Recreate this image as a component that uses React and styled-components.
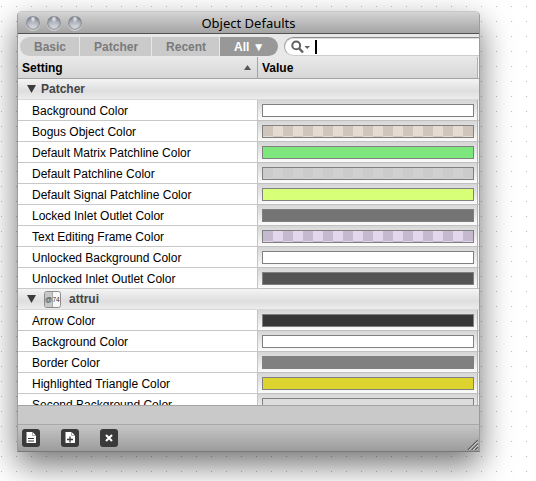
import React, { useState } from "react";
import styled, { createGlobalStyle, css } from "styled-components";

const GlobalStyle = createGlobalStyle`
  * { box-sizing: border-box; }
  body {
    margin: 0;
    font-family: "Liberation Sans", Arial, sans-serif;
    font-size: 12px;
    color: #000;
  }
  button { font: inherit; color: inherit; border: 0; margin: 0; padding: 0; background: none; }
`;

const Canvas = styled.main`
  display: flex;
  height: 100vh;
  padding: 11px 56px 29px 17px;
  overflow: hidden;
  background:
    linear-gradient(transparent 1px, #fff 1px) 1px 6px / 15px 15px,
    linear-gradient(90deg, #bebebe 1px, #fff 1px) 1px 6px / 15px 15px;
`;

const Window = styled.section`
  display: flex;
  flex-direction: column;
  flex: 1;
  min-width: 0;
  border: 1px solid #9c9c9c;
  border-top-color: #c8c8c8;
  border-bottom-color: #787878;
  border-radius: 5px 5px 0 0;
  background: #e8e8e8;
  box-shadow: 0 13px 32px rgba(0, 0, 0, 0.55);
`;

const TitleBar = styled.header`
  display: grid;
  grid-template-columns: 1fr auto 1fr;
  align-items: center;
  height: 22px;
  padding: 1px 8px 0;
  border-bottom: 1px solid #555055;
  border-radius: 4px 4px 0 0;
  background: linear-gradient(#d4d4d4, #a4a4a4);
`;

const Lights = styled.div`
  display: flex;
  gap: 7px;
`;

const Light = styled.button`
  width: 14px;
  height: 14px;
  border-radius: 50%;
  background:
    radial-gradient(ellipse at 50% 15%, #fff 0, transparent 30%),
    linear-gradient(#707682, #b0b4bc 45%, #eceef0);
  box-shadow: inset 0 0 2px 1px #7c818b, 0 1px 0 #d4d4d4;
`;

const Title = styled.h1`
  margin: 0;
  font: 400 13px/20px "Noto Sans", sans-serif;
`;

const Toolbar = styled.div`
  display: flex;
  align-items: flex-start;
  gap: 6px;
  height: 23px;
  padding: 3px 0 0 2px;
  background: #e8e8e8;
`;

const Tabs = styled.nav`
  display: flex;
  gap: 1px;
`;

const Tab = styled.button`
  height: 19px;
  padding: 0 13px 0 14px;
  background: ${(p) => (p.$active ? "#989898" : "#cacaca")};
  color: ${(p) => (p.$active ? "#fff" : "#7a7a7a")};
  font-weight: 700;
  line-height: 18px;
  white-space: nowrap;
  &:first-child { border-radius: 10px 0 0 10px; }
  &:last-child { border-radius: 0 10px 10px 0; }
`;

const SearchBox = styled.label`
  display: flex;
  align-items: center;
  flex: 1;
  min-width: 0;
  height: 19px;
  padding-left: 6px;
  border: solid #8c8c8c;
  border-width: 1px 0 1px 1px;
  border-bottom-color: #ccc;
  border-left-color: #a4a4a4;
  border-radius: 10px 0 0 10px;
  background: #fff;
  box-shadow: inset 0 1px 0 #ddd;
`;

const Caret = styled.span`
  width: 2px;
  height: 14px;
  margin-left: 4px;
  background: #000;
`;

const SearchInput = styled.input`
  flex: 1;
  min-width: 0;
  border: 0;
  padding: 0;
  outline: 0;
  background: transparent;
  font: inherit;
`;

const Pane = styled.div`
  flex: 1;
  min-height: 0;
  overflow: auto;
  scrollbar-width: none;
  background: #fff;
`;

const Table = styled.table`
  width: 100%;
  table-layout: fixed;
  border-collapse: separate;
  border-spacing: 0;
  font-size: 12px;
`;

const edge = css`
  box-shadow: inset -1px 0 #f4f4f4, inset -2px 0 #b0b0b0;
`;

const ColumnHead = styled.th`
  width: ${(p) => (p.$setting ? "240px" : "auto")};
  height: 22px;
  padding: 0 6px 0 4px;
  border-bottom: 1px solid #a4a4a4;
  border-right: ${(p) => (p.$setting ? "1px solid #a4a4a4" : "0")};
  background: linear-gradient(#e9e9e9, #d6d6d6);
  text-align: left;
  ${(p) => !p.$setting && edge}
`;

const HeadContent = styled.div`
  display: flex;
  align-items: center;
  justify-content: space-between;
`;

const GroupHead = styled.th`
  height: 21px;
  padding: 0 9px;
  border-bottom: 1px solid #d8d8d8;
  background: linear-gradient(#f4f4f4, #dedede 60%, #ececec);
  text-align: left;
`;

const GroupToggle = styled.button`
  display: flex;
  align-items: center;
  gap: ${(p) => (p.$wide ? "8px" : "5px")};
  height: 20px;
  color: #444;
  font-weight: 700;
`;

const NameCell = styled.td`
  height: 21px;
  padding: 2px 0 0 14px;
  border-bottom: 1px solid #c8c8c8;
  border-right: 1px solid #c4c4c4;
  line-height: 18px;
  white-space: nowrap;
  background: #fff;
`;

const ValueCell = styled.td`
  height: 21px;
  padding: 0 5px 0 4px;
  border-bottom: 1px solid #c0c0c0;
  background: linear-gradient(#d6d6d6, #fbfbfb);
  ${edge}
`;

const Swatch = styled.button`
  display: block;
  width: 100%;
  height: 13px;
  border: 1px solid #808080;
  background: ${(p) =>
    p.$alt
      ? `repeating-conic-gradient(${p.$alt} 0 25%, ${p.$color} 0 50%) 0 0 / 20px 20px`
      : p.$color};
`;

const StatusStrip = styled.div`
  height: 19px;
  border-top: 1px solid #a4a4a4;
  background: #c9c9c9;
`;

const Footer = styled.footer`
  display: flex;
  align-items: flex-start;
  justify-content: space-between;
  height: 27px;
  padding: 4px 0 0 4px;
  border-top: 1px solid #a8a8a8;
  background: linear-gradient(#c6c6c6, #9c9c9c);
`;

const Actions = styled.div`
  display: flex;
  gap: 21px;
`;

const ActionButton = styled.button`
  width: 18px;
  height: 18px;
  border-radius: 3px;
  background: #3a3a3a;
  svg { display: block; }
`;

const Grip = styled.svg`
  align-self: flex-end;
  margin: 0 1px 1px 0;
`;

const groups = [
  {
    name: "Patcher",
    rows: [
      ["Background Color", "#ffffff"],
      ["Bogus Object Color", "#cfc5bb", "#e5dbd1"],
      ["Default Matrix Patchline Color", "#7de77e"],
      ["Default Patchline Color", "#cbcbcb", "#d0d0d0"],
      ["Default Signal Patchline Color", "#d8ff78"],
      ["Locked Inlet Outlet Color", "#747474"],
      ["Text Editing Frame Color", "#c5b9cf", "#e3d7eb"],
      ["Unlocked Background Color", "#ffffff"],
      ["Unlocked Inlet Outlet Color", "#545454"],
    ],
  },
  {
    name: "attrui",
    icon: true,
    rows: [
      ["Arrow Color", "#373737"],
      ["Background Color", "#ffffff"],
      ["Border Color", "#808080"],
      ["Highlighted Triangle Color", "#dcd32e"],
      ["Second Background Color", "#dddddd"],
    ],
  },
];

const Disclosure = () => (
  <svg width="9" height="8" viewBox="0 0 9 8" aria-hidden="true">
    <path d="M0 0H9L4.5 8Z" fill="#3c3c3c" />
  </svg>
);

const AttruiIcon = () => (
  <svg width="17" height="17" viewBox="0 0 17 17" aria-hidden="true">
    <rect x=".5" y=".5" width="16" height="16" rx="2" fill="#f8f8f8" stroke="#8c8c8c" />
    <path d="M2 1H8V16H2Q1 16 1 15V2Q1 1 2 1Z" fill="#c8c8c8" />
    <path d="M8.5 1V16" stroke="#a8a8a8" />
    <text x="1" y="11" fontSize="7" fontWeight="400" fill="#333">@</text>
    <text x="8.5" y="11" fontSize="6.5" fontWeight="400" fill="#333">74</text>
  </svg>
);

const SearchIcon = () => (
  <svg width="20" height="14" viewBox="0 0 20 14" aria-hidden="true">
    <circle cx="5.2" cy="5.4" r="3.9" fill="none" stroke="#606060" strokeWidth="2" />
    <path d="M8 8.2L12 12.5" stroke="#606060" strokeWidth="2.4" />
    <path d="M13.5 6H19L16.2 9Z" fill="#606060" />
  </svg>
);

const page = "M4.5 3H10.5L14 6.5V14H4.5Z";

const PageIcon = () => (
  <svg width="18" height="18" viewBox="0 0 18 18" aria-hidden="true">
    <path d={page} fill="#fff" />
    <path d="M10.5 3V6.5H14" fill="none" stroke="#8a8a8a" strokeWidth=".7" />
    <path d="M6 9.5H12M6 12H12" stroke="#3a3a3a" strokeWidth="1.1" />
  </svg>
);

const AddPageIcon = () => (
  <svg width="18" height="18" viewBox="0 0 18 18" aria-hidden="true">
    <path d={page} fill="#fff" />
    <path d="M10.5 3V6.5H14" fill="none" stroke="#8a8a8a" strokeWidth=".7" />
    <path d="M6 10.5H12M9 7.5V13.5" stroke="#3a3a3a" strokeWidth="1.3" />
  </svg>
);

const CloseIcon = () => (
  <svg width="18" height="18" viewBox="0 0 18 18" aria-hidden="true">
    <path d="M6 6L12 12M12 6L6 12" stroke="#fff" strokeWidth="2.1" />
  </svg>
);

function Group({ group }) {
  const [open, setOpen] = useState(true);
  return (
    <tbody>
      <tr>
        <GroupHead colSpan={2} scope="colgroup">
          <GroupToggle $wide={group.icon} aria-expanded={open} onClick={() => setOpen(!open)}>
            <Disclosure />
            {group.icon && <AttruiIcon />}
            {group.name}
          </GroupToggle>
        </GroupHead>
      </tr>
      {open &&
        group.rows.map(([name, color, alt]) => (
          <tr key={name}>
            <NameCell>{name}</NameCell>
            <ValueCell>
              <Swatch $color={color} $alt={alt} aria-label={name} />
            </ValueCell>
          </tr>
        ))}
    </tbody>
  );
}

export default function App() {
  const [tab, setTab] = useState("All ▼");
  return (
    <>
      <GlobalStyle />
      <Canvas>
        <Window>
          <TitleBar>
            <Lights>
              <Light aria-label="Close" />
              <Light aria-label="Minimize" />
              <Light aria-label="Zoom" />
            </Lights>
            <Title>Object Defaults</Title>
          </TitleBar>
          <Toolbar>
            <Tabs>
              {["Basic", "Patcher", "Recent", "All ▼"].map((t) => (
                <Tab key={t} $active={t === tab} onClick={() => setTab(t)}>
                  {t}
                </Tab>
              ))}
            </Tabs>
            <SearchBox>
              <SearchIcon />
              <Caret />
              <SearchInput type="text" aria-label="Search" />
            </SearchBox>
          </Toolbar>
          <Pane>
            <Table>
              <thead>
                <tr>
                  <ColumnHead $setting scope="col">
                    <HeadContent>
                      Setting
                      <svg width="7" height="5" viewBox="0 0 7 5" aria-hidden="true">
                        <path d="M0 5L3.5 0L7 5Z" fill="#555" />
                      </svg>
                    </HeadContent>
                  </ColumnHead>
                  <ColumnHead scope="col">Value</ColumnHead>
                </tr>
              </thead>
              {groups.map((g) => (
                <Group key={g.name} group={g} />
              ))}
            </Table>
          </Pane>
          <StatusStrip />
          <Footer>
            <Actions>
              <ActionButton aria-label="Open defaults"><PageIcon /></ActionButton>
              <ActionButton aria-label="Add defaults"><AddPageIcon /></ActionButton>
              <ActionButton aria-label="Clear"><CloseIcon /></ActionButton>
            </Actions>
            <Grip width="11" height="11" viewBox="0 0 12 12" aria-hidden="true">
              <path d="M1 12L12 1M5 12L12 5M9 12L12 9" stroke="#555" strokeWidth="1.2" />
              <path d="M2.5 12L12 2.5M6.5 12L12 6.5M10.5 12L12 10.5" stroke="#ddd" />
            </Grip>
          </Footer>
        </Window>
      </Canvas>
    </>
  );
}
